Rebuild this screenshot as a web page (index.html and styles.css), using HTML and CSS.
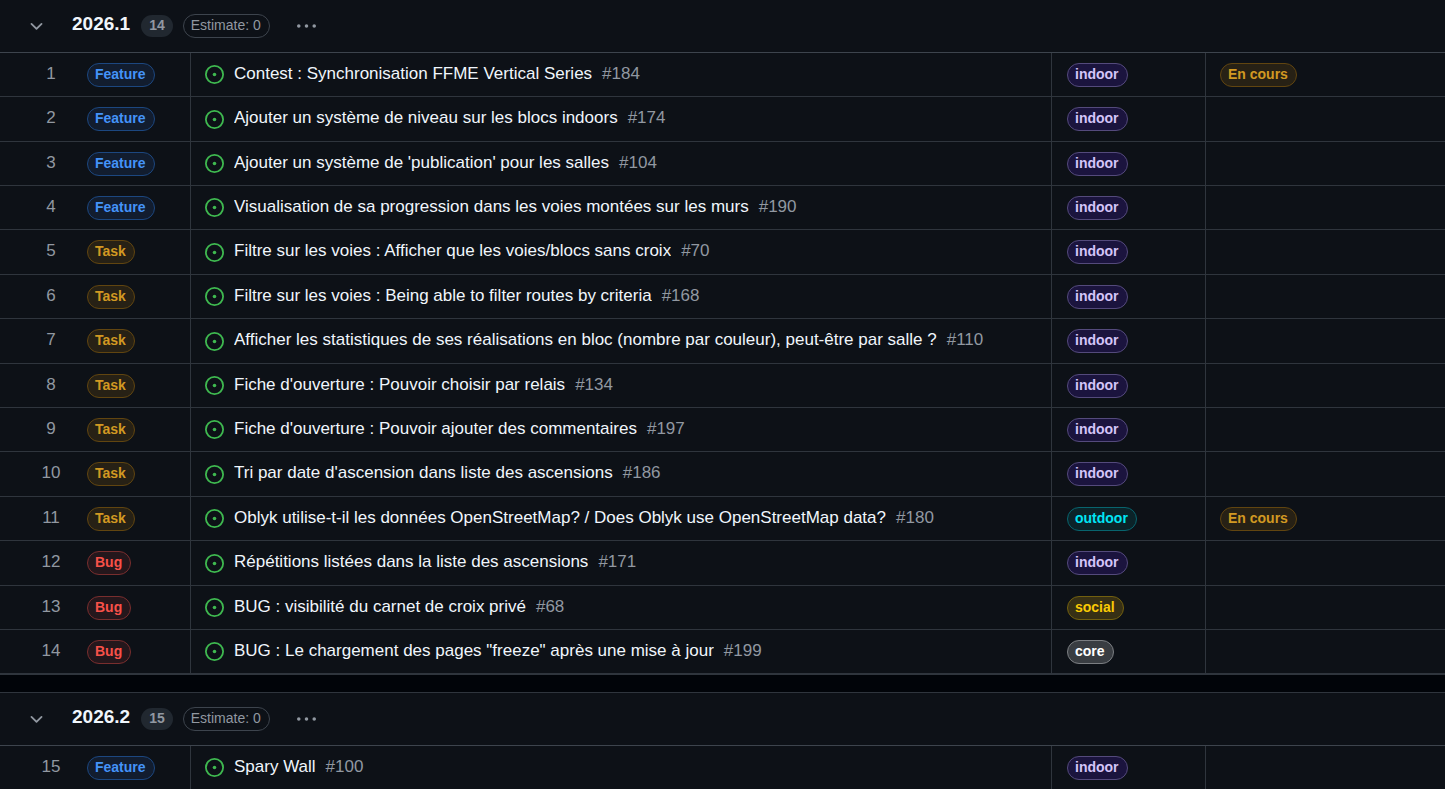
FILE: index.html
```html
<!DOCTYPE html>
<html lang="fr">
<head>
  <meta charset="UTF-8">
  <meta name="viewport" content="width=device-width, initial-scale=1.0">
  <title>Roadmap</title>
  <link rel="stylesheet" href="styles.css">
</head>
<body>

  <!-- Icons -->
  <svg class="sprite" aria-hidden="true">
    <symbol id="icon-open" viewBox="0 0 16 16">
      <path d="M8 9.5a1.5 1.5 0 1 0 0-3 1.5 1.5 0 0 0 0 3Z"/>
      <path d="M8 0a8 8 0 1 1 0 16A8 8 0 0 1 8 0ZM1.5 8a6.5 6.5 0 1 0 13 0 6.5 6.5 0 0 0-13 0Z"/>
    </symbol>
    <symbol id="icon-chevron" viewBox="0 0 16 16">
      <path d="M12.78 5.22a.749.749 0 0 1 0 1.06l-4.25 4.25a.749.749 0 0 1-1.06 0L3.22 6.28a.749.749 0 1 1 1.06-1.06L8 8.939l3.72-3.719a.749.749 0 0 1 1.06 0Z"/>
    </symbol>
    <symbol id="icon-dots" viewBox="0 0 16 16">
      <path d="M8 9a1.5 1.5 0 1 0 0-3 1.5 1.5 0 0 0 0 3ZM1.5 9a1.5 1.5 0 1 0 0-3 1.5 1.5 0 0 0 0 3Zm13 0a1.5 1.5 0 1 0 0-3 1.5 1.5 0 0 0 0 3Z"/>
    </symbol>
  </svg>

  <!-- 2026.1 -->
  <section class="group">
    <header class="group-header">
      <button class="icon-button toggle" type="button" aria-label="Replier 2026.1"><svg class="icon"><use href="#icon-chevron"/></svg></button>
      <h2>2026.1</h2>
      <span class="counter">14</span>
      <span class="label estimate">Estimate: 0</span>
      <button class="icon-button more" type="button" aria-label="Actions"><svg class="icon"><use href="#icon-dots"/></svg></button>
    </header>
    <table class="items">
      <tbody>
        <tr>
          <td class="num">1</td>
          <td class="type"><span class="label blue">Feature</span></td>
          <td class="title"><div class="issue"><svg class="icon open"><use href="#icon-open"/></svg><a href="#">Contest : Synchronisation FFME Vertical Series</a><span class="ref">#184</span></div></td>
          <td class="tag"><span class="label indoor">indoor</span></td>
          <td class="status"><span class="label yellow">En cours</span></td>
        </tr>
        <tr>
          <td class="num">2</td>
          <td class="type"><span class="label blue">Feature</span></td>
          <td class="title"><div class="issue"><svg class="icon open"><use href="#icon-open"/></svg><a href="#">Ajouter un système de niveau sur les blocs indoors</a><span class="ref">#174</span></div></td>
          <td class="tag"><span class="label indoor">indoor</span></td>
          <td class="status"></td>
        </tr>
        <tr>
          <td class="num">3</td>
          <td class="type"><span class="label blue">Feature</span></td>
          <td class="title"><div class="issue"><svg class="icon open"><use href="#icon-open"/></svg><a href="#">Ajouter un système de 'publication' pour les salles</a><span class="ref">#104</span></div></td>
          <td class="tag"><span class="label indoor">indoor</span></td>
          <td class="status"></td>
        </tr>
        <tr>
          <td class="num">4</td>
          <td class="type"><span class="label blue">Feature</span></td>
          <td class="title"><div class="issue"><svg class="icon open"><use href="#icon-open"/></svg><a href="#">Visualisation de sa progression dans les voies montées sur les murs</a><span class="ref">#190</span></div></td>
          <td class="tag"><span class="label indoor">indoor</span></td>
          <td class="status"></td>
        </tr>
        <tr>
          <td class="num">5</td>
          <td class="type"><span class="label yellow">Task</span></td>
          <td class="title"><div class="issue"><svg class="icon open"><use href="#icon-open"/></svg><a href="#">Filtre sur les voies : Afficher que les voies/blocs sans croix</a><span class="ref">#70</span></div></td>
          <td class="tag"><span class="label indoor">indoor</span></td>
          <td class="status"></td>
        </tr>
        <tr>
          <td class="num">6</td>
          <td class="type"><span class="label yellow">Task</span></td>
          <td class="title"><div class="issue"><svg class="icon open"><use href="#icon-open"/></svg><a href="#">Filtre sur les voies : Being able to filter routes by criteria</a><span class="ref">#168</span></div></td>
          <td class="tag"><span class="label indoor">indoor</span></td>
          <td class="status"></td>
        </tr>
        <tr>
          <td class="num">7</td>
          <td class="type"><span class="label yellow">Task</span></td>
          <td class="title"><div class="issue"><svg class="icon open"><use href="#icon-open"/></svg><a href="#">Afficher les statistiques de ses réalisations en bloc (nombre par couleur), peut-être par salle ?</a><span class="ref">#110</span></div></td>
          <td class="tag"><span class="label indoor">indoor</span></td>
          <td class="status"></td>
        </tr>
        <tr>
          <td class="num">8</td>
          <td class="type"><span class="label yellow">Task</span></td>
          <td class="title"><div class="issue"><svg class="icon open"><use href="#icon-open"/></svg><a href="#">Fiche d'ouverture : Pouvoir choisir par relais</a><span class="ref">#134</span></div></td>
          <td class="tag"><span class="label indoor">indoor</span></td>
          <td class="status"></td>
        </tr>
        <tr>
          <td class="num">9</td>
          <td class="type"><span class="label yellow">Task</span></td>
          <td class="title"><div class="issue"><svg class="icon open"><use href="#icon-open"/></svg><a href="#">Fiche d'ouverture : Pouvoir ajouter des commentaires</a><span class="ref">#197</span></div></td>
          <td class="tag"><span class="label indoor">indoor</span></td>
          <td class="status"></td>
        </tr>
        <tr>
          <td class="num">10</td>
          <td class="type"><span class="label yellow">Task</span></td>
          <td class="title"><div class="issue"><svg class="icon open"><use href="#icon-open"/></svg><a href="#">Tri par date d'ascension dans liste des ascensions</a><span class="ref">#186</span></div></td>
          <td class="tag"><span class="label indoor">indoor</span></td>
          <td class="status"></td>
        </tr>
        <tr>
          <td class="num">11</td>
          <td class="type"><span class="label yellow">Task</span></td>
          <td class="title"><div class="issue"><svg class="icon open"><use href="#icon-open"/></svg><a href="#">Oblyk utilise-t-il les données OpenStreetMap? / Does Oblyk use OpenStreetMap data?</a><span class="ref">#180</span></div></td>
          <td class="tag"><span class="label outdoor">outdoor</span></td>
          <td class="status"><span class="label yellow">En cours</span></td>
        </tr>
        <tr>
          <td class="num">12</td>
          <td class="type"><span class="label red">Bug</span></td>
          <td class="title"><div class="issue"><svg class="icon open"><use href="#icon-open"/></svg><a href="#">Répétitions listées dans la liste des ascensions</a><span class="ref">#171</span></div></td>
          <td class="tag"><span class="label indoor">indoor</span></td>
          <td class="status"></td>
        </tr>
        <tr>
          <td class="num">13</td>
          <td class="type"><span class="label red">Bug</span></td>
          <td class="title"><div class="issue"><svg class="icon open"><use href="#icon-open"/></svg><a href="#">BUG : visibilité du carnet de croix privé</a><span class="ref">#68</span></div></td>
          <td class="tag"><span class="label social">social</span></td>
          <td class="status"></td>
        </tr>
        <tr>
          <td class="num">14</td>
          <td class="type"><span class="label red">Bug</span></td>
          <td class="title"><div class="issue"><svg class="icon open"><use href="#icon-open"/></svg><a href="#">BUG : Le chargement des pages "freeze" après une mise à jour</a><span class="ref">#199</span></div></td>
          <td class="tag"><span class="label core">core</span></td>
          <td class="status"></td>
        </tr>
      </tbody>
    </table>
  </section>

  <!-- 2026.2 -->
  <section class="group">
    <header class="group-header">
      <button class="icon-button toggle" type="button" aria-label="Replier 2026.2"><svg class="icon"><use href="#icon-chevron"/></svg></button>
      <h2>2026.2</h2>
      <span class="counter">15</span>
      <span class="label estimate">Estimate: 0</span>
      <button class="icon-button more" type="button" aria-label="Actions"><svg class="icon"><use href="#icon-dots"/></svg></button>
    </header>
    <table class="items">
      <tbody>
        <tr>
          <td class="num">15</td>
          <td class="type"><span class="label blue">Feature</span></td>
          <td class="title"><div class="issue"><svg class="icon open"><use href="#icon-open"/></svg><a href="#">Spary Wall</a><span class="ref">#100</span></div></td>
          <td class="tag"><span class="label indoor">indoor</span></td>
          <td class="status"></td>
        </tr>
      </tbody>
    </table>
  </section>

</body>
</html>
```

FILE: styles.css
```css
* {
  box-sizing: border-box;
}

html {
  scrollbar-width: none;
}

body {
  margin: 0;
  background-color: #010409;
  color: #f0f6fc;
  font-family: "Liberation Sans", Arial, Helvetica, sans-serif;
  font-size: 17px;
  line-height: 20px;
}

.sprite {
  display: none;
}

/* Groups */
.group {
  background-color: #0d1117;
  border-bottom: 1px solid #2f353d;
}

.group + .group {
  margin-top: 17px;
  border-top: 1px solid #2f353d;
}

.group-header {
  display: flex;
  align-items: center;
  height: 53px;
  padding-left: 27px;
  border-bottom: 1px solid #3d444d;
}

.group-header h2 {
  margin: 0 11px 0 26px;
  padding-bottom: 4px;
  font-size: 19px;
}

.counter {
  margin-right: 10px;
  padding: 0 8px 2px;
  border-radius: 11px;
  background-color: #212830;
  color: #9198a1;
  font-size: 14px;
  font-weight: bold;
}

.icon {
  display: block;
  flex: none;
  width: 19px;
  height: 19px;
  fill: currentColor;
}

.open {
  color: #3fb950;
}

.icon-button {
  padding: 0;
  border: none;
  background: none;
  color: #9198a1;
  cursor: pointer;
}

.more {
  margin-left: 27px;
}

/* Items */
.items {
  width: 100%;
  table-layout: fixed;
  border-collapse: separate;
  border-spacing: 0;
}

.items td {
  height: 44px;
  padding: 0;
  border-bottom: 1px solid #2f353d;
}

.items tr:nth-child(5n) td,
.items tr:nth-child(5n + 2) td {
  height: 45px;
}

.items .num {
  width: 72px;
  padding: 0 0 2px 30px;
  color: #9198a1;
  text-align: center;
}

.items .type {
  width: 118px;
  padding-left: 15px;
}

.items .title,
.items .tag,
.items .status {
  padding-left: 14px;
  border-left: 1px solid #2f353d;
}

.items .tag {
  width: 154px;
  padding-left: 15px;
}

.items .status {
  width: 240px;
}

.issue {
  display: flex;
  align-items: center;
}

.issue a {
  margin: 0 10px;
  padding-bottom: 2px;
  overflow: hidden;
  color: #f0f6fc;
  text-decoration: none;
  text-overflow: ellipsis;
  white-space: nowrap;
}

.issue a:hover {
  text-decoration: underline;
}

.ref {
  padding-bottom: 2px;
  color: #9198a1;
}

/* Labels */
.label {
  display: block;
  width: fit-content;
  padding: 0 8px 2px 7px;
  border: 1px solid;
  border-radius: 12px;
  font-size: 14px;
  font-weight: bold;
  white-space: nowrap;
}

.estimate {
  border-color: #3d444d;
  color: #9198a1;
  font-weight: normal;
}

.blue {
  border-color: #1c4780;
  background-color: #121d2f;
  color: #4493f8;
}

.yellow {
  border-color: #614510;
  background-color: #272115;
  color: #d29922;
}

.red {
  border-color: #792e2e;
  background-color: #25171c;
  color: #f85149;
}

.indoor {
  border-color: #544a7c;
  background-color: #1b143e;
  color: #d4c5f9;
}

.outdoor {
  border-color: #08646e;
  background-color: #0b2329;
  color: #00e5f5;
}

.social {
  border-color: #72600f;
  background-color: #373015;
  color: #fbca04;
}

.core {
  border-color: #7b7e82;
  background-color: #393d42;
  color: #ffffff;
}
```
